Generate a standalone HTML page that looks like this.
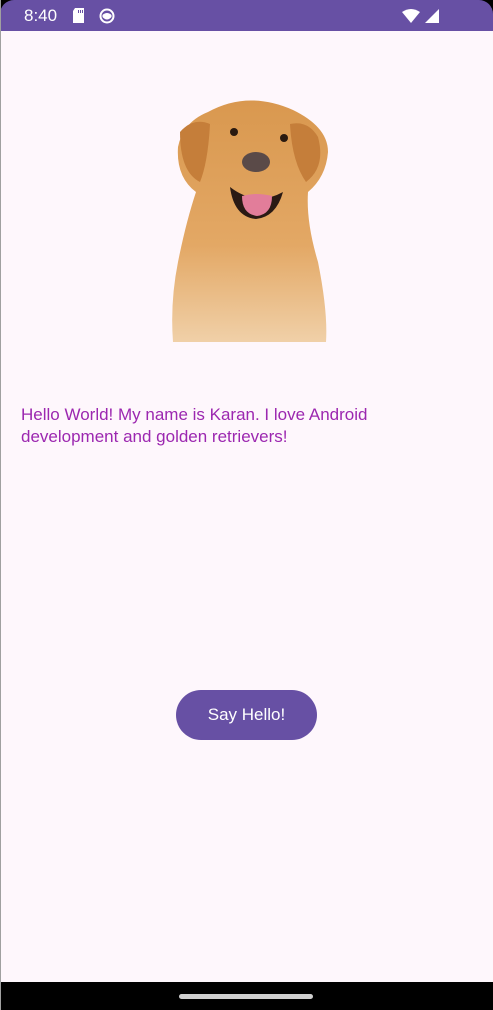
<!DOCTYPE html>
<html><head><meta charset="utf-8"><style>
html,body{margin:0;padding:0}
body{width:493px;height:1010px;position:relative;overflow:hidden;background:#fef7fc;font-family:"Liberation Sans",Roboto,sans-serif}
.edge{position:absolute;left:0;top:0;width:1px;height:1010px;background:#a0a0a0}
.sb{position:absolute;left:0;top:0;width:493px;height:31px;background:#000}
.sbi{position:absolute;left:0;top:0;width:493px;height:31px;background:#6750a4;border-radius:14px 14px 0 0}
.time{position:absolute;left:24px;top:6px;color:#fff;font-size:17px}
.txt{position:absolute;left:21px;top:404px;width:370px;font-size:17px;line-height:22px;color:#9c27b0}
.btn{position:absolute;left:176px;top:690px;width:141px;height:50px;border-radius:25px;background:#6750a4;color:#fff;font-size:17px;text-align:center;line-height:50px}
.nav{position:absolute;left:0;top:982px;width:493px;height:28px;background:#000}
.pill{position:absolute;left:179px;top:994px;width:134px;height:5px;border-radius:3px;background:#d0d0d0}
</style></head><body>
<div class="sb"><div class="sbi"></div></div>
<div class="time">8:40</div>
<svg style="position:absolute;left:72px;top:8px" width="14" height="15"><path d="M3 0H12V15H1V3Z" fill="#fff"/><rect x="6" y="2" width="1" height="3" fill="#6750a4"/><rect x="8" y="2" width="1" height="3" fill="#6750a4"/><rect x="10" y="2" width="1" height="3" fill="#6750a4"/></svg>
<svg style="position:absolute;left:99px;top:8px" width="16" height="16"><circle cx="8" cy="8" r="6.5" fill="none" stroke="#fff" stroke-width="2"/><path d="M3.5 7Q8 3 12.5 7V9Q8 14 3.5 9Z" fill="#fff"/></svg>
<svg style="position:absolute;left:402px;top:9px" width="38" height="15"><path d="M0 3Q9 -3 18 3L9 14Z" fill="#fff"/><path d="M37 0V14H23Z" fill="#fff"/></svg>
<svg style="position:absolute;left:168px;top:92px" width="165" height="252" viewBox="0 0 165 252">
<defs><linearGradient id="g" x1="0" y1="0" x2="0" y2="1"><stop offset="0" stop-color="#d9984f"/><stop offset="0.6" stop-color="#e3a865"/><stop offset="1" stop-color="#f0d0a8"/></linearGradient></defs>
<path d="M40 20Q80 -2 125 18Q160 35 160 60Q158 85 140 100Q138 130 150 170Q160 220 158 250H5Q2 210 10 170Q18 130 28 100Q8 85 10 55Q15 30 40 20Z" fill="url(#g)"/>
<path d="M12 40Q25 25 42 32Q40 70 32 90Q12 80 12 40Z" fill="#c57e3a"/>
<path d="M150 45Q140 28 122 32Q124 70 138 90Q158 75 150 45Z" fill="#c57e3a"/>
<circle cx="66" cy="40" r="4" fill="#2a1a10"/><circle cx="116" cy="46" r="4" fill="#2a1a10"/>
<ellipse cx="88" cy="70" rx="14" ry="10" fill="#5a4a48"/>
<path d="M62 95Q88 115 115 100Q108 125 88 127Q66 125 62 95Z" fill="#2a1a14"/>
<path d="M74 104Q88 100 104 104Q104 122 89 124Q74 122 74 104Z" fill="#e27d9a"/>
</svg>
<div class="txt">Hello World! My name is Karan. I love Android development and golden retrievers!</div>
<div class="btn">Say Hello!</div>
<div class="nav"></div><div class="pill"></div>
<div class="edge"></div>
</body></html>
